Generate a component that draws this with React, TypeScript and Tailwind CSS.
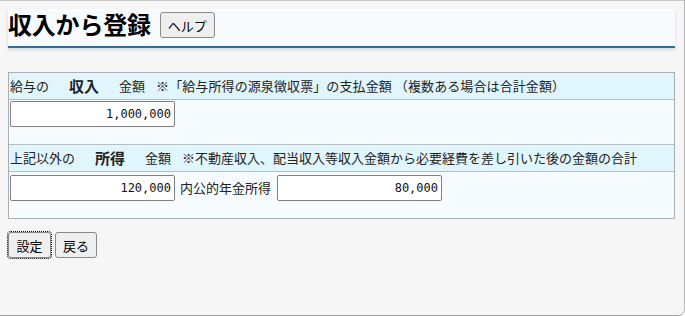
import React from "react";

const jp = "font-['Meiryo','Noto_Sans_CJK_JP',sans-serif]";

function Btn({ children, className = "" }: { children: React.ReactNode; className?: string }) {
  return (
    <button
      className={`h-[26px] bg-[#efefef] border border-[#8a8a8a] rounded-[3px] text-[13px] leading-[13px] text-black px-[6px] ${className}`}
    >
      {children}
    </button>
  );
}

function NumInput({ value }: { value: string }) {
  return (
    <div className="w-[165px] h-[26px] bg-white border border-[#808080] rounded-[2px] flex items-center justify-end pr-[3px] font-['DejaVu_Sans_Mono',monospace] text-[12px] text-[#111] shrink-0">
      {value}
    </div>
  );
}

export default function App() {
  return (
    <div className={`w-[685px] h-[316px] bg-[#f6f6f6] border-t border-[#c6c6c6] border-r border-b border-r-[#b8b8b8] border-b-[#a0a0a0] rounded-br-[7px] overflow-hidden ${jp} text-[#222]`}>
      <div className="pl-2 pr-[9px] pt-2">
        {/* header */}
        <div className="h-[39px] bg-[#f7fbfd] border-b-2 border-[#2c6f9c] shadow-[0_2px_3px_rgba(0,0,0,0.13)] flex items-start pt-[3px]">
          <h1 className="text-[24px] leading-[24px] font-bold text-black tracking-[-0.2px]">収入から登録</h1>
          <Btn className="ml-[9px] w-[55px] px-0">ヘルプ</Btn>
        </div>

        {/* table */}
        <div className="mt-6 border border-[#a8b0b5] bg-[#f5fbfe] text-[13px]">
          <div className="h-[27px] bg-[#e1f5fd] border-b border-[#b4bec4] flex items-center pl-px whitespace-nowrap">
            <span>給与の</span>
            <span className="ml-[20px] text-[15px] font-bold">収入</span>
            <span className="ml-[20px]">金額</span>
            <span className="ml-[11px] tracking-[0.1px]">※「給与所得の源泉徴収票」の支払金額 （複数ある場合は合計金額）</span>
          </div>
          <div className="h-[45px] border-b border-[#b4bec4] pl-px pt-px">
            <NumInput value="1,000,000" />
          </div>
          <div className="h-[27px] bg-[#e1f5fd] border-b border-[#b4bec4] flex items-center pl-px whitespace-nowrap">
            <span>上記以外の</span>
            <span className="ml-[20px] text-[15px] font-bold">所得</span>
            <span className="ml-[20px]">金額</span>
            <span className="ml-[11px]">※不動産収入、配当収入等収入金額から必要経費を差し引いた後の金額の合計</span>
          </div>
          <div className="h-[46px] pl-px pt-[3px] flex items-start">
            <NumInput value="120,000" />
            <span className="ml-[5px] mr-[6px] leading-[26px] whitespace-nowrap">内公的年金所得</span>
            <NumInput value="80,000" />
          </div>
        </div>

        {/* buttons */}
        <div className="mt-[13px] flex gap-[4px]">
          <Btn className="w-[43px] px-0 outline outline-1 outline-dotted outline-black outline-offset-0">設定</Btn>
          <Btn className="w-[42px] px-0">戻る</Btn>
        </div>
      </div>
    </div>
  );
}
